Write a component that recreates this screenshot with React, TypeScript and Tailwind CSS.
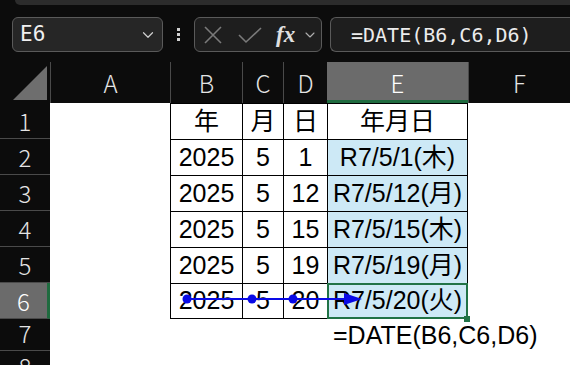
import { ChevronDown } from "lucide-react";

// Excel-like sheet: DATE() built from year / month / day columns.

const COLS = [
  { key: "A", w: "w-[120px]" },
  { key: "B", w: "w-[72px]" },
  { key: "C", w: "w-[41px]" },
  { key: "D", w: "w-[44px]" },
  { key: "E", w: "w-[141px]" },
  { key: "F", w: "w-[102px]" },
];

const ROWS: [string, string, string, string][] = [
  ["年", "月", "日", "年月日"],
  ["2025", "5", "1", "R7/5/1(木)"],
  ["2025", "5", "12", "R7/5/12(月)"],
  ["2025", "5", "15", "R7/5/15(木)"],
  ["2025", "5", "19", "R7/5/19(月)"],
  ["2025", "5", "20", "R7/5/20(火)"],
];

const cellFont = { fontFamily: '"Liberation Sans", "Noto Sans CJK JP", sans-serif' };
const headFont = { fontFamily: '"Noto Sans CJK JP", "DejaVu Sans", sans-serif' };

function FormulaBar() {
  return (
    <div className="mt-[12px] flex h-[35px] items-stretch pl-[12px]">
      <div className="flex w-[151px] shrink-0 items-center justify-between rounded-[6px] border border-[#5a5a5a] bg-[#262626] pl-[7px] pr-[5px]">
        <span
          className="text-[21px] leading-none text-[#f0f0f0]"
          style={{ fontFamily: '"DejaVu Sans Mono", monospace' }}
        >
          E6
        </span>
        <ChevronDown className="h-[18px] w-[18px] text-[#cfcfcf]" strokeWidth={1.6} />
      </div>
      <div className="flex w-[31px] shrink-0 flex-col items-center justify-center gap-[2px]">
        <span className="h-[3px] w-[3px] bg-[#d0d0d0]" />
        <span className="h-[3px] w-[3px] bg-[#d0d0d0]" />
        <span className="h-[3px] w-[3px] bg-[#d0d0d0]" />
      </div>
      <div className="flex w-[128px] shrink-0 items-center rounded-[6px] border border-[#5a5a5a] bg-[#1e1e1e] pl-[8px]">
        <svg width="20" height="20" viewBox="0 0 20 20" className="shrink-0 text-[#7a7a7a]">
          <path d="M2 2 L18 18 M18 2 L2 18" stroke="currentColor" strokeWidth="1.6" fill="none" />
        </svg>
        <svg width="26" height="20" viewBox="0 0 26 20" className="ml-[14px] shrink-0 text-[#7a7a7a]">
          <path d="M2 10 L9 17 L24 3" stroke="currentColor" strokeWidth="1.6" fill="none" />
        </svg>
        <span
          className="ml-[13px] text-[23px] font-bold italic leading-none text-[#e0e0e0]"
          style={{ fontFamily: '"Liberation Serif", serif' }}
        >
          fx
        </span>
        <ChevronDown className="ml-[7px] h-[16px] w-[16px] shrink-0 text-[#b0b0b0]" strokeWidth={1.6} />
      </div>
      <div className="ml-[8px] flex w-[260px] shrink-0 items-center rounded-l-[6px] border border-r-0 border-[#5a5a5a] bg-[#1e1e1e] pl-[20px]">
        <span
          className="whitespace-nowrap text-[20px] leading-none text-[#ececec]"
          style={{ fontFamily: '"DejaVu Sans Mono", monospace' }}
        >
          =DATE(B6,C6,D6)
        </span>
      </div>
    </div>
  );
}

function ColumnHeaders() {
  return (
    <div className="mt-[10px] flex h-[41px] text-[24px] font-light" style={headFont}>
      <div className="flex w-[50px] items-end justify-end pb-[3px] pr-[3px]">
        <div className="h-[34px] w-[34px] bg-[#6e6e6e] [clip-path:polygon(100%_0,100%_100%,0_100%)]" />
      </div>
      {COLS.map((c) =>
        c.key === "E" ? (
          <div
            key={c.key}
            className={`${c.w} flex items-center justify-center border-b-[3px] border-[#1f6b3f] bg-[#6b6b6b] pt-[3px] text-white`}
          >
            {c.key}
          </div>
        ) : (
          <div
            key={c.key}
            className={`${c.w} flex items-center justify-center border-l border-[#4a4a4a] text-[#e4e4e4]`}
          >
            {c.key}
          </div>
        )
      )}
    </div>
  );
}

function RowHeader({ n, tall = true }: { n: number; tall?: boolean }) {
  const selected = n === 6;
  return (
    <div
      className={`flex w-[50px] justify-center border-b border-[#4a4a4a] text-[24px] font-light leading-none ${
        tall ? "h-[36px] items-center" : "h-[32px] items-start pt-[2px]"
      } ${
        selected ? "border-r-[3px] border-r-[#1f6b3f] bg-[#6b6b6b] text-white" : "bg-[#0c0c0c] text-[#e4e4e4]"
      }`}
      style={headFont}
    >
      {n}
    </div>
  );
}

function Body() {
  return (
    <div className="relative">
      {ROWS.map((r, i) => {
        const last = i === ROWS.length - 1;
        const edge = `border-l border-t border-black ${last ? "border-b" : ""}`;
        return (
          <div key={i} className="flex h-[36px] text-[25px] text-black" style={cellFont}>
            <RowHeader n={i + 1} />
            <div className="w-[120px] bg-white" />
            <div className={`flex w-[72px] items-center justify-center bg-white ${edge}`}>{r[0]}</div>
            <div className={`flex w-[41px] items-center justify-center bg-white ${edge}`}>{r[1]}</div>
            <div className={`flex w-[44px] items-center justify-center bg-white ${edge}`}>{r[2]}</div>
            <div
              className={`relative flex w-[141px] items-center justify-center whitespace-nowrap border-r ${edge} ${
                i === 0 ? "bg-white" : "bg-[#cde9f6]"
              }`}
            >
              {r[3]}
              {last ? (
                <>
                  <div className="absolute -left-[1px] -top-[1px] h-[36px] w-[141px] border-2 border-[#217346]" />
                  <div className="absolute -bottom-[4px] -right-[3px] h-[6px] w-[6px] bg-[#217346]" />
                </>
              ) : null}
            </div>
            <div className="w-[102px] bg-white" />
          </div>
        );
      })}
      <div className="flex h-[32px] text-[25px] text-black" style={cellFont}>
        <RowHeader n={7} tall={false} />
        <div className="w-[120px] bg-white" />
        <div className="w-[72px] bg-white" />
        <div className="w-[41px] bg-white" />
        <div className="w-[44px] bg-white" />
        <div className="relative z-10 flex w-[141px] items-center overflow-visible whitespace-nowrap pl-[6px] pt-[2px]">
          =DATE(B6,C6,D6)
        </div>
        <div className="w-[102px] bg-white" />
      </div>
      <div className="flex h-[36px]">
        <div
          className="flex h-[36px] w-[50px] items-start justify-center bg-[#0c0c0c] pt-[3px] text-[24px] font-light leading-none text-[#e4e4e4]"
          style={headFont}
        >
          8
        </div>
        <div className="flex-1 bg-white" />
      </div>

      {/* precedent arrow over row 6 */}
      <svg className="pointer-events-none absolute left-0 top-0 z-20" width="570" height="260">
        <line x1="187" y1="196" x2="350" y2="196" stroke="#0a0ae6" strokeWidth="2" />
        <polygon points="344,190 362,196 344,202" fill="#0a0ae6" />
        <circle cx="187" cy="196" r="4.5" fill="#0a0ae6" />
        <circle cx="252" cy="196" r="4.5" fill="#0a0ae6" />
        <circle cx="293" cy="196" r="4.5" fill="#0a0ae6" />
      </svg>
    </div>
  );
}

export default function App() {
  return (
    <div className="h-[365px] w-[570px] overflow-hidden bg-[#0c0c0c]">
      <div className="ml-[15px] h-[5px] rounded-bl-[8px] bg-[#2c2c2c]" />
      <FormulaBar />
      <ColumnHeaders />
      <div className="bg-white">
        <Body />
      </div>
    </div>
  );
}
